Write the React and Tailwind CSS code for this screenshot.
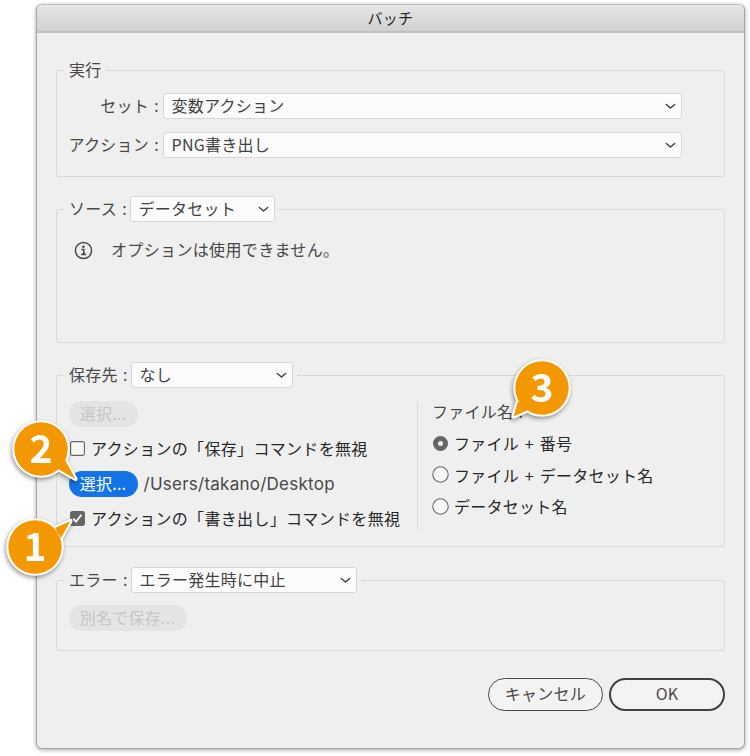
import React, { useState } from "react";

const Chevron = () => (
  <svg className="w-[11px] h-[7px] shrink-0" viewBox="0 0 11 7" fill="none" aria-hidden="true">
    <path d="M1.3 1.5 5.5 5l4.2-3.5" stroke="#3c3c3c" strokeWidth="1.4" strokeLinecap="round" strokeLinejoin="round" />
  </svg>
);

const Select = ({ value, className }) => (
  <button
    type="button"
    className={`flex items-center justify-between h-[26px] pl-[7.5px] pr-[5px] border border-[#d6d6d6] rounded-[3px] bg-[#fcfcfc] text-[#424242] whitespace-nowrap ${className}`}
  >
    <span className="pb-[2px]">{value}</span>
    <Chevron />
  </button>
);

const Group = ({ legend, className, children }) => (
  <fieldset className={`border border-[#d9d9d9] rounded-[3px] ${className}`}>
    <legend className="flex items-center h-[26px] ml-[7px] pl-[5px] pr-1 whitespace-nowrap">{legend}</legend>
    {children}
  </fieldset>
);

const PillButton = ({ children, className, ...props }) => (
  <button type="button" className={`h-[26px] pb-[2px] rounded-full whitespace-nowrap ${className}`} {...props}>
    {children}
  </button>
);

const Checkbox = ({ label, checked, onChange }) => (
  <button
    type="button"
    role="checkbox"
    aria-checked={checked}
    onClick={onChange}
    className="flex items-center gap-[6.5px] text-[#272727] whitespace-nowrap tracking-[0.32px]"
  >
    <svg className="w-[15px] h-[15px]" viewBox="0 0 15 15" fill="none">
      <rect x="0.6" y="0.6" width="13.8" height="13.8" rx="1.6" fill={checked ? "#666" : "#f7f7f7"} stroke="#666" strokeWidth="1.1" />
      {checked && <path d="m3.2 7.7 2.8 3 5.4-7" stroke="#fff" strokeWidth="1.8" />}
    </svg>
    <span className="pb-[2px]">{label}</span>
  </button>
);

const Radio = ({ label, checked, onChange }) => (
  <button
    type="button"
    role="radio"
    aria-checked={checked}
    onClick={onChange}
    className="flex items-center gap-[5px] h-6 text-[#272727] whitespace-nowrap [word-spacing:2px]"
  >
    <svg className="w-[17px] h-[17px]" viewBox="0 0 17 17" fill="none">
      {checked ? (
        <circle cx="8.5" cy="8.5" r="5" stroke="#666" strokeWidth="5" />
      ) : (
        <circle cx="8.5" cy="8.5" r="7.7" fill="#f7f7f7" stroke="#666" strokeWidth="1.1" />
      )}
    </svg>
    {label}
  </button>
);

// tail is drawn relative to the centre of the balloon
const Balloon = ({ number, tail, className }) => (
  <div className={`absolute w-20 h-20 pointer-events-none ${className}`}>
    <svg
      className="w-20 h-20 drop-shadow-[-1px_2px_2px_rgba(0,0,0,0.4)]"
      viewBox="-40 -40 80 80"
    >
      <g stroke="#fff" strokeWidth="4.2" strokeLinejoin="round" fill="#fff">
        <circle r="26.7" />
        <path d={tail} />
      </g>
      <g fill="#f39800">
        <circle r="26.7" />
        <path d={tail} />
      </g>
      <text
        y="14"
        textAnchor="middle"
        fill="#fff"
        className="text-[39px] font-bold"
      >
        {number}
      </text>
    </svg>
  </div>
);

export default function App() {
  const [ignoreSave, setIgnoreSave] = useState(false);
  const [ignoreExport, setIgnoreExport] = useState(true);
  const [naming, setNaming] = useState(0);

  const namings = ["ファイル + 番号", "ファイル + データセット名", "データセット名"];

  return (
    <div className="relative w-[750px] h-[756px] overflow-hidden bg-white pl-9 pt-1 text-[16px] leading-6 tracking-[0.25px] [word-spacing:1.5px] text-[#484848] font-['Noto_Sans_CJK_JP',sans-serif]">
      <div className="w-[709px] h-[745px] border border-[#a5a5a5] border-t-[#c0c0c0] rounded-[6px] bg-[#efefef] shadow-[0_1px_4px_rgba(0,0,0,0.35)] overflow-hidden">
        {/* Title bar */}
        <div className="flex items-center justify-center h-7 border-b-2 border-[#bfbfbf] bg-linear-to-b from-[#e6e6e6] to-[#d0d0d0] text-[15px] text-[#262626]">
          バッチ
        </div>

        <div className="px-[19px] pt-6">
          {/* Play */}
          <Group legend={<span className="pb-[2px]">実行</span>} className="h-[120px]">
            <div className="flex flex-col gap-[13px] pt-[10px] pr-[42px]">
              <div className="flex items-center justify-end gap-1">
                <span className="pb-[2px]">セット :</span>
                <Select value="変数アクション" className="w-[519px]" />
              </div>
              <div className="flex items-center justify-end gap-1">
                <span className="pb-[2px]">アクション :</span>
                <Select value="PNG書き出し" className="w-[519px]" />
              </div>
            </div>
          </Group>

          {/* Source */}
          <Group
            className="h-[147px] mt-[19px]"
            legend={
              <>
                <span className="w-[61px] pb-[2px]">ソース :</span>
                <Select value="データセット" className="w-[145px]" />
              </>
            }
          >
            <div className="flex items-center gap-[18px] pl-[17px] pt-[15px]">
              <svg className="w-[19px] h-[19px]" viewBox="0 0 19 19" fill="none" aria-hidden="true">
                <circle cx="9.5" cy="9.5" r="8.1" stroke="#484848" strokeWidth="1.5" />
                <circle cx="9.4" cy="5.7" r="1.3" fill="#484848" />
                <path d="M7.3 8.5h2.5v4.8M7.2 13.4h4.8" stroke="#484848" strokeWidth="1.6" />
              </svg>
              <span className="pb-[2px] tracking-[0.35px]">オプションは使用できません。</span>
            </div>
          </Group>

          {/* Destination */}
          <Group
            className="h-[185px] mt-[19px]"
            legend={
              <>
                <span className="w-[62px] pb-[2px]">保存先 :</span>
                <Select value="なし" className="w-[162px]" />
              </>
            }
          >
            <div className="flex pl-[11.5px] pt-[13px]">
              <div className="w-[349px] h-[128px] border-r border-[#d9d9d9]">
                <PillButton disabled className="w-[69px] bg-[#e4e4e4] text-[#c6c6c6]">選択...</PillButton>
                <div className="flex items-center h-[44px] pb-px pl-px">
                  <Checkbox
                    label="アクションの「保存」コマンドを無視"
                    checked={ignoreSave}
                    onChange={() => setIgnoreSave(!ignoreSave)}
                  />
                </div>
                <div className="flex items-center gap-[6px]">
                  <PillButton className="w-[69px] bg-[#1473e6] text-white">選択...</PillButton>
                  <span className="font-['Inter',sans-serif] text-[17px] tracking-[0.25px]">/Users/takano/Desktop</span>
                </div>
                <div className="flex items-center h-[44px] pb-px pl-px">
                  <Checkbox
                    label="アクションの「書き出し」コマンドを無視"
                    checked={ignoreExport}
                    onChange={() => setIgnoreExport(!ignoreExport)}
                  />
                </div>
              </div>
              <div className="pl-[14.5px]">
                <div className="h-[32px] -mt-[2px]">ファイル名 :</div>
                <div className="flex flex-col gap-[7.5px]" role="radiogroup">
                  {namings.map((label, index) => (
                    <Radio
                      key={label}
                      label={label}
                      checked={naming === index}
                      onChange={() => setNaming(index)}
                    />
                  ))}
                </div>
              </div>
            </div>
          </Group>

          {/* Errors */}
          <Group
            className="h-[84px] mt-[20px]"
            legend={
              <>
                <span className="w-[62px] pb-[2px]">エラー :</span>
                <Select value="エラー発生時に中止" className="w-[226px]" />
              </>
            }
          >
            <div className="pl-[11.5px] pt-3">
              <PillButton disabled className="w-[118px] bg-[#e4e4e4] text-[#c6c6c6]">別名で保存...</PillButton>
            </div>
          </Group>

          <div className="flex justify-end gap-[6px] mt-[27px]">
            <button type="button" className="w-[115px] h-[33px] pb-[3px] rounded-full border border-[#484848] bg-[#f3f3f3]">
              キャンセル
            </button>
            <button type="button" className="w-[116px] h-[33px] pb-[3px] rounded-full border-2 border-[#404040] bg-[#f3f3f3]">
              OK
            </button>
          </div>
        </div>
      </div>

      <Balloon number="1" tail="M20 -19 L35.5 -26 L26 -9 Z" className="left-[-5px] top-[507px]" />
      <Balloon number="2" tail="M17 20 L34.5 30 L24 11 Z" className="left-[1px] top-[409px]" />
      <Balloon number="3" tail="M-24 13 L-28.5 28.5 L-14 22 Z" className="left-[502px] top-[348px]" />
    </div>
  );
}
